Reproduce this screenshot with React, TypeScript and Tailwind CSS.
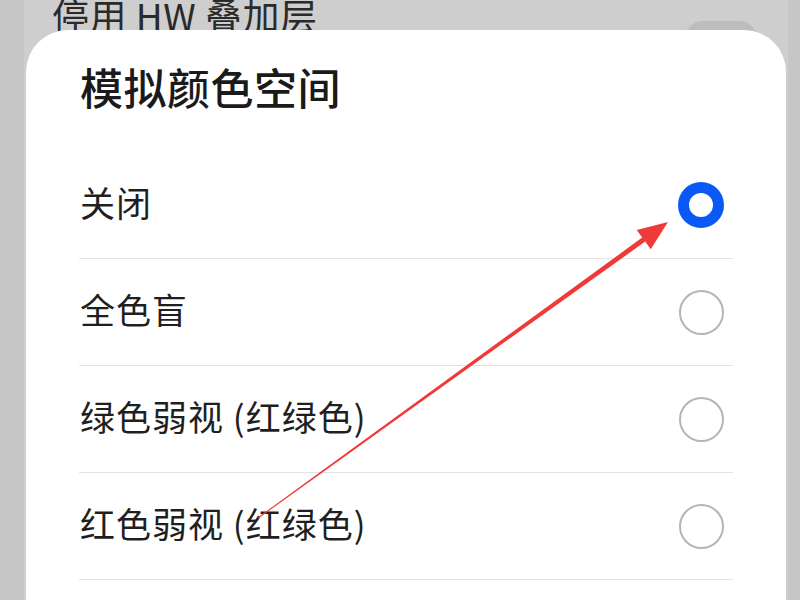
import React from "react";

const font = { fontFamily: '"Noto Sans CJK SC", "Noto Sans", sans-serif' };

function Radio({ selected }: { selected: boolean }) {
  return selected ? (
    <div className="w-[46px] h-[46px] rounded-full border-[11px] border-[#0a59f7] bg-white mr-[9px]" />
  ) : (
    <div className="w-[45px] h-[45px] rounded-full border-2 border-[#b5b5b5] bg-white mr-[9px]" />
  );
}

const items = [
  { label: "关闭", selected: true },
  { label: "全色盲", selected: false },
  { label: "绿色弱视 (红绿色)", selected: false },
  { label: "红色弱视 (红绿色)", selected: false },
];

export default function App() {
  return (
    <div className="w-[800px] h-[600px] overflow-hidden bg-[#c6c6c6] relative" style={font}>
      <div className="ml-[24px] w-[764px] h-[600px] bg-[#cecece] relative">
        <div className="flex items-start justify-between pl-[28px] pr-[31px]">
          <div className="text-[37px] leading-none text-[#2a2a2a] mt-[-3px] tracking-[0.5px]">停用 HW 叠加层</div>
          <div className="w-[72px] h-[36px] rounded-full bg-[#bdbdbd] mt-[21px]" />
        </div>
        <div className="absolute left-[2px] top-[30px] w-[760px] h-[620px] bg-white rounded-t-[42px] px-[53px]">
          <div className="h-[122px] flex items-center pl-[1px] pb-[9px]">
            <div className="text-[43px] leading-none font-medium text-[#1a1a1a] tracking-[0.5px]">模拟颜色空间</div>
          </div>
          {items.map((it) => (
            <div
              key={it.label}
              className="h-[107px] flex items-center justify-between border-b border-[#e3e3e3] pl-[1px]"
            >
              <div className="text-[35px] leading-none text-[#1f1f1f] tracking-[1px] mb-[8px]">{it.label}</div>
              <Radio selected={it.selected} />
            </div>
          ))}
        </div>
      </div>
      <svg className="absolute left-0 top-0 pointer-events-none" width="800" height="600" viewBox="0 0 800 600">
        <polygon
          points="258.3,518.4 257.7,517.6 642.2,237.6 636.7,229.9 668,222 650.7,249.3 645.2,241.6"
          fill="#f03a3a"
        />
      </svg>
    </div>
  );
}
